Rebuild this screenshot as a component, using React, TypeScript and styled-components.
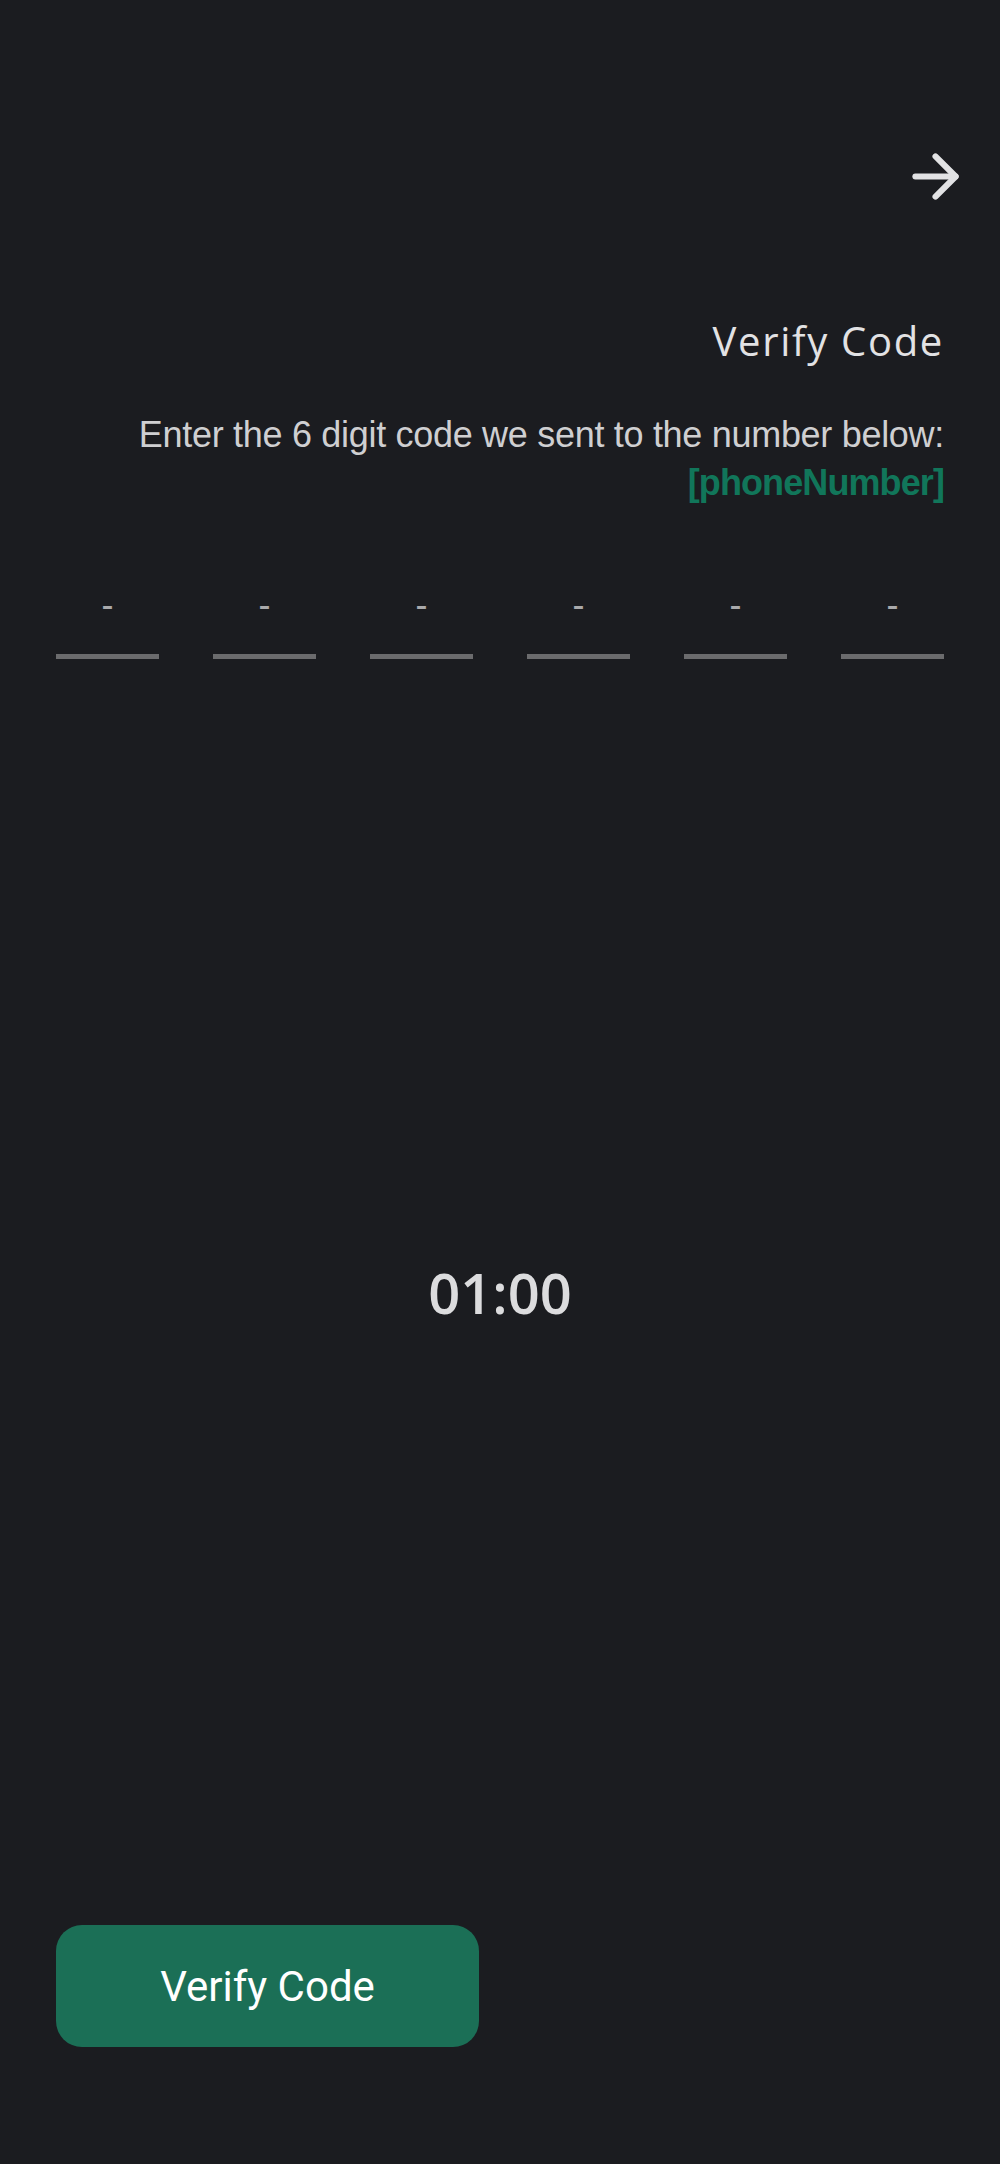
import React, { useState } from 'react';
import styled, { createGlobalStyle } from 'styled-components';
import { ArrowRight } from 'lucide-react';

const GlobalStyle = createGlobalStyle`
    html, body {
        margin: 0;
        padding: 0;
        background: #1b1c20;
    }

    * {
        box-sizing: border-box;
    }
`;

const Screen = styled.div`
    min-height: 100vh;
    display: flex;
    flex-direction: column;
    padding: 0 56px 117px;
    background: #1b1c20;
`;

const TopBar = styled.div`
    display: flex;
    justify-content: flex-end;
    padding-top: 142px;
    margin-right: -26px;
`;

const IconButton = styled.button`
    display: flex;
    padding: 0;
    border: none;
    background: none;
    color: #e2e2e4;
    cursor: pointer;
`;

const Title = styled.h1`
    margin: 106px 0 0;
    text-align: right;
    font-family: "Open Sans", "Noto Sans", sans-serif;
    font-weight: 500;
    font-size: 40px;
    line-height: 48px;
    letter-spacing: 1.7px;
    color: #e2e2e4;
`;

const Subtitle = styled.p`
    margin: 46px 0 0;
    text-align: right;
    font-family: "Liberation Sans", Arial, sans-serif;
    font-size: 36px;
    line-height: 48px;
    letter-spacing: -0.3px;
    color: #cfcfd1;
`;

const Phone = styled.span`
    display: block;
    font-weight: 700;
    letter-spacing: -0.9px;
    color: #11765a;
`;

const CodeRow = styled.div`
    display: grid;
    grid-template-columns: repeat(6, 1fr);
    column-gap: 54px;
    margin-top: 78px;
`;

const DigitInput = styled.input`
    width: 100%;
    height: 74px;
    padding: 0 0 29px;
    border: none;
    border-bottom: 5px solid #6b6b6d;
    background: transparent;
    outline: none;
    text-align: center;
    font-family: "Liberation Sans", Arial, sans-serif;
    font-size: 36px;
    line-height: 40px;
    color: #e2e2e4;

    &::placeholder {
        color: #a9a9ab;
    }
`;

const TimerArea = styled.div`
    flex: 1;
    display: flex;
    align-items: center;
    justify-content: center;
`;

const Timer = styled.div`
    font-family: "Open Sans", "Noto Sans", sans-serif;
    font-weight: 600;
    font-size: 56px;
    line-height: 56px;
    color: #dcdcde;
`;

const PrimaryButton = styled.button`
    width: 423px;
    height: 122px;
    border: none;
    border-radius: 26px;
    background: #1b6f56;
    color: #ffffff;
    font-family: Roboto, "Noto Sans", sans-serif;
    font-size: 42px;
    cursor: pointer;
`;

export default function App() {
    const [code, setCode] = useState(['', '', '', '', '', '']);

    return (
        <>
            <GlobalStyle />
            <Screen>
                <TopBar>
                    <IconButton aria-label="Next">
                        <ArrowRight size={69} strokeWidth={2.1} />
                    </IconButton>
                </TopBar>

                <Title>Verify Code</Title>

                <Subtitle>
                    Enter the 6 digit code we sent to the number below:
                    <Phone>[phoneNumber]</Phone>
                </Subtitle>

                <CodeRow>
                    {code.map((digit, i) => (
                        <DigitInput
                            key={i}
                            maxLength={1}
                            placeholder="-"
                            value={digit}
                            onChange={(e) => {
                                const next = [...code];
                                next[i] = e.target.value;
                                setCode(next);
                            }}
                        />
                    ))}
                </CodeRow>

                <TimerArea>
                    <Timer>01:00</Timer>
                </TimerArea>

                <div>
                    <PrimaryButton>Verify Code</PrimaryButton>
                </div>
            </Screen>
        </>
    );
}
